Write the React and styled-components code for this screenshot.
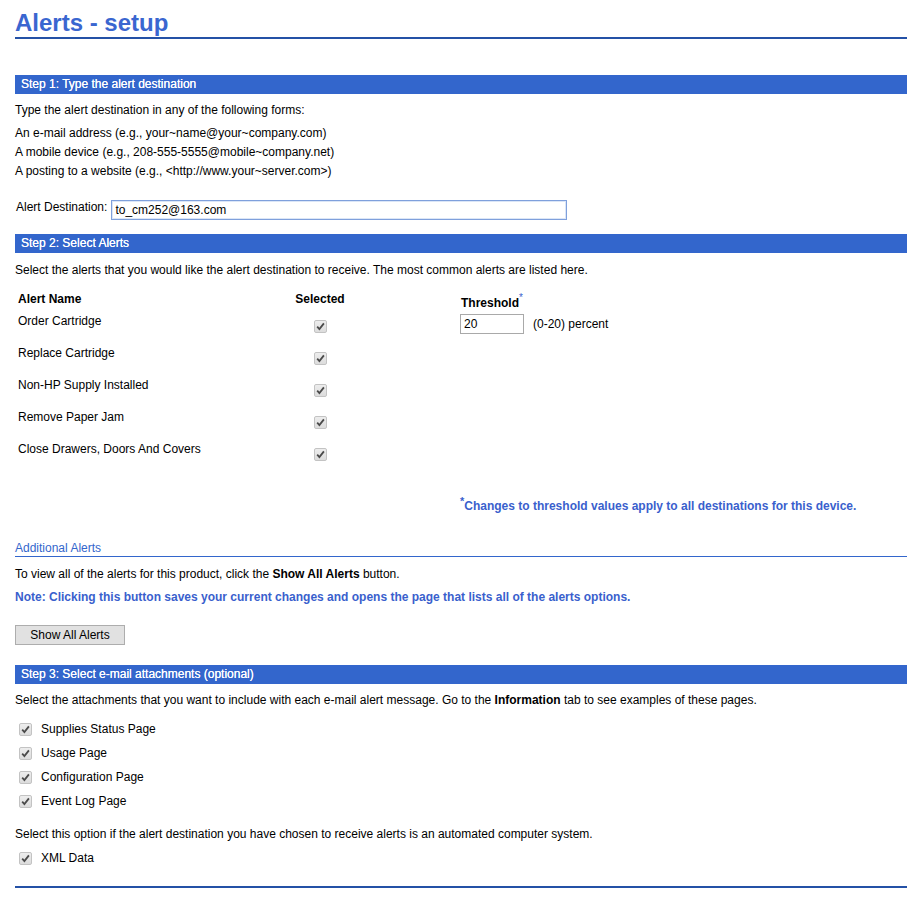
import React from "react";
import styled, { createGlobalStyle } from "styled-components";

const GlobalStyle = createGlobalStyle`
  html, body {
    margin: 0;
    padding: 0;
    background: #fff;
  }
  body {
    font-family: "Liberation Sans", Arial, sans-serif;
    font-size: 12px;
    color: #000;
  }
`;

const Page = styled.div`
  padding: 0 0 20px 15px;
`;

const Title = styled.h1`
  margin: 0;
  padding-top: 8px;
  height: 29px;
  font-size: 24px;
  line-height: 29px;
  font-weight: bold;
  color: #3a66d0;
  border-bottom: 2px solid #2451a6;
`;

const StepBar = styled.div`
  margin-top: ${p => p.$top || 0}px;
  height: 19px;
  line-height: 19px;
  padding-left: 6px;
  background: #3366cc;
  color: #fff;
  font-size: 12px;
  text-shadow: 0 0 0.4px #fff;
`;

const Text = styled.p`
  margin: ${p => p.$top || 0}px 0 0;
  line-height: ${p => p.$lh || 18}px;
  color: ${p => (p.$blue ? "#3a5fcd" : "#000")};
  font-weight: ${p => (p.$bold ? "bold" : "normal")};
`;

const FormList = styled.div`
  margin-top: 5px;
  line-height: 19px;
`;

const DestRow = styled.div`
  display: flex;
  align-items: flex-start;
  gap: 4px;
  margin-top: 19px;
  padding-left: 1px;
`;

const Label = styled.label`
  line-height: 14px;
`;

const TextInput = styled.input`
  box-sizing: border-box;
  width: ${p => p.$w}px;
  height: 20px;
  padding: 0 3px;
  font-family: "Liberation Sans", Arial, sans-serif;
  font-size: 12px;
  color: #000;
  border: 1px solid ${p => (p.$focus ? "#7fa0dc" : "#a9a9a9")};
  box-shadow: ${p => (p.$focus ? "inset 0 0 0 1px #dbe6f7" : "none")};
  outline: none;
  background: #fff;
`;

const AlertGrid = styled.div`
  margin-top: 9px;
  display: grid;
  grid-template-columns: 255px 100px 1fr;
  grid-auto-rows: 32px;
  grid-template-rows: 22px;
`;

const HeadCell = styled.div`
  font-weight: bold;
  line-height: 22px;
  padding-left: ${p => p.$pl || 0}px;
  text-align: ${p => p.$align || "left"};
`;

const ThresholdHead = styled.div`
  align-self: end;
  font-weight: bold;
  line-height: 14px;
  padding-left: 91px;
  sup {
    color: #3a5fcd;
    font-weight: normal;
    font-size: 10px;
    vertical-align: 6px;
    line-height: 0;
  }
`;

const NameCell = styled.div`
  line-height: 22px;
  padding-left: 3px;
`;

const CheckCell = styled.div`
  display: flex;
  justify-content: center;
  padding-top: 10px;
`;

const ThresholdCell = styled.div`
  display: flex;
  align-items: center;
  gap: 9px;
  padding-left: 90px;
  height: 20px;
  margin-top: 4px;
`;

const Footnote = styled.div`
  margin-top: 28px;
  padding-left: 445px;
  line-height: 16px;
  font-weight: bold;
  color: #3a5fcd;
  sup {
    font-size: 11px;
    vertical-align: 5px;
    line-height: 0;
  }
`;

const SubHead = styled.div`
  margin-top: 26px;
  line-height: 16px;
  color: #3366cc;
  border-bottom: 1px solid #3366cc;
`;

const Button = styled.button`
  margin-top: 19px;
  width: 110px;
  height: 20px;
  font-family: "Liberation Sans", Arial, sans-serif;
  font-size: 12px;
  color: #000;
  background: #e1e1e1;
  border: 1px solid #adadad;
  padding: 0;
`;

const CheckList = styled.div`
  margin-top: ${p => p.$top || 0}px;
`;

const CheckRow = styled.label`
  display: flex;
  align-items: center;
  height: 24px;
  padding-left: 4px;
  gap: 9px;
`;

const Box = styled.span`
  box-sizing: border-box;
  display: inline-flex;
  align-items: center;
  justify-content: center;
  width: 13px;
  height: 13px;
  border: 1px solid #c3c3c3;
  border-radius: 2px;
  background: linear-gradient(#ededed, #dcdcdc);
  flex: none;
`;

const BottomRule = styled.div`
  margin-top: 16px;
  height: 2px;
  background: #2451a6;
`;

function Check() {
  return (
    <Box>
      <svg width="9" height="9" viewBox="0 0 9 9">
        <path d="M1.2 4.6 L3.4 7 L7.9 1.4" fill="none" stroke="#4a4a4a" strokeWidth="1.8" />
      </svg>
    </Box>
  );
}

const alerts = [
  "Order Cartridge",
  "Replace Cartridge",
  "Non-HP Supply Installed",
  "Remove Paper Jam",
  "Close Drawers, Doors And Covers",
];

const attachments = ["Supplies Status Page", "Usage Page", "Configuration Page", "Event Log Page"];

export default function App() {
  return (
    <Page>
      <GlobalStyle />
      <Title>Alerts - setup</Title>

      <StepBar $top={36}>Step 1: Type the alert destination</StepBar>
      <Text $top={7}>Type the alert destination in any of the following forms:</Text>
      <FormList>
        <div>An e-mail address (e.g., your~name@your~company.com)</div>
        <div>A mobile device (e.g., 208-555-5555@mobile~company.net)</div>
        <div>A posting to a website (e.g., &lt;http://www.your~server.com&gt;)</div>
      </FormList>
      <DestRow>
        <Label>Alert Destination:</Label>
        <TextInput $w={456} $focus defaultValue="to_cm252@163.com" />
      </DestRow>

      <StepBar $top={14}>Step 2: Select Alerts</StepBar>
      <Text $top={8}>
        Select the alerts that you would like the alert destination to receive. The most common alerts are listed here.
      </Text>
      <AlertGrid>
        <HeadCell $pl={3}>Alert Name</HeadCell>
        <HeadCell $align="center">Selected</HeadCell>
        <ThresholdHead>
          Threshold<sup>*</sup>
        </ThresholdHead>
        {alerts.map((a, i) => (
          <React.Fragment key={a}>
            <NameCell>{a}</NameCell>
            <CheckCell>
              <Check />
            </CheckCell>
            {i === 0 ? (
              <ThresholdCell>
                <TextInput $w={64} defaultValue="20" />
                <span>(0-20) percent</span>
              </ThresholdCell>
            ) : (
              <div />
            )}
          </React.Fragment>
        ))}
      </AlertGrid>
      <Footnote>
        <sup>*</sup>Changes to threshold values apply to all destinations for this device.
      </Footnote>

      <SubHead>Additional Alerts</SubHead>
      <Text $top={8}>
        To view all of the alerts for this product, click the <b>Show All Alerts</b> button.
      </Text>
      <Text $top={5} $blue $bold>
        Note: Clicking this button saves your current changes and opens the page that lists all of the alerts options.
      </Text>
      <Button type="button">Show All Alerts</Button>

      <StepBar $top={20}>Step 3: Select e-mail attachments (optional)</StepBar>
      <Text $top={7}>
        Select the attachments that you want to include with each e-mail alert message. Go to the <b>Information</b> tab
        to see examples of these pages.
      </Text>
      <CheckList $top={8}>
        {attachments.map(a => (
          <CheckRow key={a}>
            <Check />
            {a}
          </CheckRow>
        ))}
      </CheckList>
      <Text $top={12}>
        Select this option if the alert destination you have chosen to receive alerts is an automated computer system.
      </Text>
      <CheckList $top={3}>
        <CheckRow>
          <Check />
          XML Data
        </CheckRow>
      </CheckList>
      <BottomRule />
    </Page>
  );
}
